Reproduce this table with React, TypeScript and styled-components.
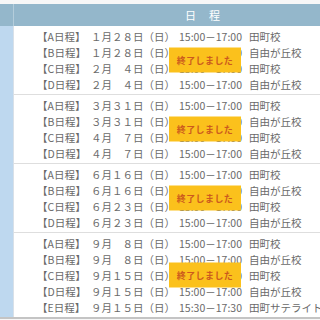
import React from "react";
import styled, { createGlobalStyle } from "styled-components";

type Row = { label: string; date: string; time: string; place: string };
type Group = { rows: Row[] };

const groups: Group[] = [
    {
        rows: [
            { label: "【A日程】", date: "１月２８日（日）", time: "15:00－17:00", place: "田町校" },
            { label: "【B日程】", date: "１月２８日（日）", time: "15:00－17:00", place: "自由が丘校" },
            { label: "【C日程】", date: "２月　４日（日）", time: "15:00－17:00", place: "田町校" },
            { label: "【D日程】", date: "２月　４日（日）", time: "15:00－17:00", place: "自由が丘校" },
        ],
    },
    {
        rows: [
            { label: "【A日程】", date: "３月３１日（日）", time: "15:00－17:00", place: "田町校" },
            { label: "【B日程】", date: "３月３１日（日）", time: "15:00－17:00", place: "自由が丘校" },
            { label: "【C日程】", date: "４月　７日（日）", time: "15:00－17:00", place: "田町校" },
            { label: "【D日程】", date: "４月　７日（日）", time: "15:00－17:00", place: "自由が丘校" },
        ],
    },
    {
        rows: [
            { label: "【A日程】", date: "６月１６日（日）", time: "15:00－17:00", place: "田町校" },
            { label: "【B日程】", date: "６月１６日（日）", time: "15:00－17:00", place: "自由が丘校" },
            { label: "【C日程】", date: "６月２３日（日）", time: "15:00－17:00", place: "田町校" },
            { label: "【D日程】", date: "６月２３日（日）", time: "15:00－17:00", place: "自由が丘校" },
        ],
    },
    {
        rows: [
            { label: "【A日程】", date: "９月　８日（日）", time: "15:00－17:00", place: "田町校" },
            { label: "【B日程】", date: "９月　８日（日）", time: "15:00－17:00", place: "自由が丘校" },
            { label: "【C日程】", date: "９月１５日（日）", time: "15:00－17:00", place: "田町校" },
            { label: "【D日程】", date: "９月１５日（日）", time: "15:00－17:00", place: "自由が丘校" },
            { label: "【E日程】", date: "９月１５日（日）", time: "15:30－17:30", place: "田町サテライト校" },
        ],
    },
];

function App() {
    return (
        <>
            <GlobalStyle />
            <Page>
                <Table>
                    <HeadSide />
                    <HeadMain>日　程</HeadMain>
                    {groups.map((g, gi) => (
                        <React.Fragment key={gi}>
                            <Side />
                            <GroupCell first={gi === 0}>
                                {g.rows.map((r, ri) => (
                                    <ScheduleRow key={ri}>
                                        <Label>{r.label}</Label>
                                        <DateText>{r.date}</DateText>
                                        <Time>{r.time}</Time>
                                        <Place>{r.place}</Place>
                                    </ScheduleRow>
                                ))}
                                <Finished>終了しました</Finished>
                            </GroupCell>
                        </React.Fragment>
                    ))}
                </Table>
            </Page>
        </>
    );
}

const GlobalStyle = createGlobalStyle`
    html, body {
        margin: 0;
        padding: 0;
        background: #ffffff;
        overflow: hidden;
    }
    body {
        font-family: "Noto Sans CJK JP", "Noto Sans", sans-serif;
    }
`;

const Page = styled.div`
    width: 320px;
    height: 320px;
    overflow: hidden;
    padding-top: 4px;
    box-sizing: border-box;
    background: #f7f7f7;
`;

const Table = styled.div`
    display: grid;
    grid-template-columns: 14px 382px;
    width: 396px;
    background: #ffffff;
    border-bottom: 2px solid #c4c4c4;
`;

const HeadSide = styled.div`
    background: #94b7cb;
    border-right: 1px solid #b4cddb;
    height: 22px;
`;

const HeadMain = styled.div`
    background: #94b7cb;
    color: #ffffff;
    font-size: 11px;
    line-height: 22px;
    height: 22px;
    text-align: center;
    letter-spacing: 1px;
    padding-right: 4px;
`;

const Side = styled.div`
    background: #bed8ef;
    border-right: 1px solid #d8e0e8;
`;

const GroupCell = styled.div<{ first: boolean }>`
    position: relative;
    display: flex;
    flex-direction: column;
    padding: 2px 0 2px 23px;
    border-top: ${(p) => (p.first ? "none" : "1px solid #dedede")};
`;

const ScheduleRow = styled.div`
    display: flex;
    align-items: center;
    height: 16px;
    font-size: 10.5px;
    color: #6a6a6a;
    white-space: nowrap;
`;

const Label = styled.span`
    width: 54px;
`;

const DateText = styled.span`
    width: 88px;
`;

const Time = styled.span`
    width: 70px;
`;

const Place = styled.span``;

const Finished = styled.div`
    position: absolute;
    left: 155px;
    top: 50%;
    transform: translateY(-50%);
    width: 72px;
    height: 25px;
    display: flex;
    align-items: center;
    justify-content: center;
    background: #fbc11c;
    color: #cc5a1e;
    font-size: 9px;
    font-weight: 600;
    letter-spacing: 0.4px;
`;

export default App;
